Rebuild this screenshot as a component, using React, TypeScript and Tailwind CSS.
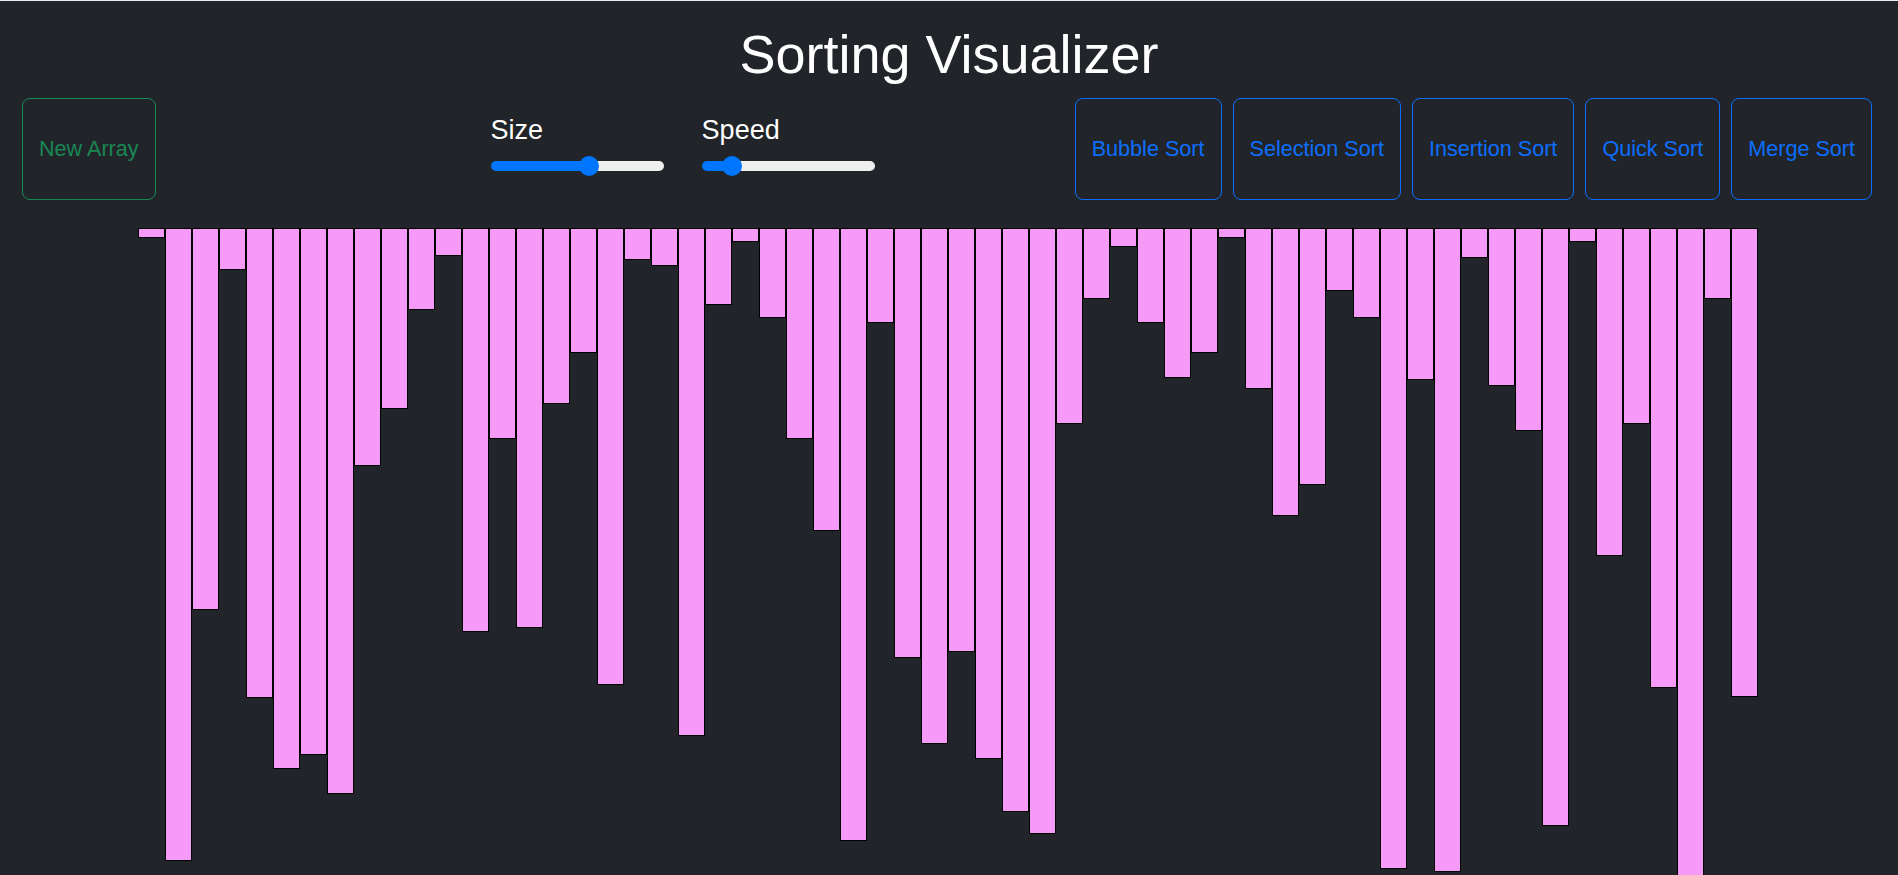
import React, { useState } from 'react';

// bar heights in px, read off the screenshot
const bars = [
  10, 633, 382, 42, 470, 541, 527, 566, 238, 181, 82, 28, 404, 211, 400, 176, 125, 457, 32, 38,
  508, 77, 14, 90, 211, 303, 613, 95, 430, 516, 424, 531, 584, 606, 196, 71, 19, 95, 150, 125,
  10, 161, 288, 257, 63, 90, 641, 152, 644, 30, 158, 203, 598, 14, 328, 196, 460, 700, 71, 469,
];

const sorts = ['Bubble Sort', 'Selection Sort', 'Insertion Sort', 'Quick Sort', 'Merge Sort'];

type SliderProps = {
  label: string;
  min: number;
  max: number;
  value: number;
  onChange: (v: number) => void;
  className?: string;
};

const Slider: React.FC<SliderProps> = ({ label, min, max, value, onChange, className }) => {
  // fill the track up to the thumb centre (track 173px, thumb 20px)
  const frac = (value - min) / (max - min);
  const pct = ((10 + frac * 153) / 173) * 100;

  return (
    <div className={`mt-[16px] flex flex-col ${className ?? ''}`}>
      <label className="text-[27px] leading-[1.2] text-white">{label}</label>
      <input
        type="range"
        min={min}
        max={max}
        value={value}
        onChange={(e) => onChange(Number(e.target.value))}
        className="mt-[15px] h-[10px] w-[173px] cursor-pointer appearance-none rounded-full outline-none [&::-webkit-slider-thumb]:h-[20px] [&::-webkit-slider-thumb]:w-[20px] [&::-webkit-slider-thumb]:appearance-none [&::-webkit-slider-thumb]:rounded-full [&::-webkit-slider-thumb]:bg-[#0075ff] [&::-webkit-slider-thumb]:border-0"
        style={{ background: `linear-gradient(to right, #0075ff ${pct}%, #efefef ${pct}%)` }}
      />
    </div>
  );
};

const App: React.FC = () => {
  const [size, setSize] = useState(60);
  const [speed, setSpeed] = useState(14);

  return (
    <div className="h-screen overflow-hidden border-t border-[#ececec] bg-[#212529] font-['Liberation_Sans',Arial,sans-serif]">
      <h1 className="pt-[21px] text-center text-[54px] leading-[1.2] text-white">Sorting Visualizer</h1>

      {/* Controls */}
      <div className="mt-[11px] flex items-start pl-[22px] pr-[26px]">
        <button className="h-[102px] rounded-[8px] border border-[#198754] px-[16px] text-[21.6px] text-[#198754]">
          New Array
        </button>

        <Slider label="Size" min={5} max={100} value={size} onChange={setSize} className="ml-[335px]" />
        <Slider label="Speed" min={1} max={100} value={speed} onChange={setSpeed} className="ml-[38px]" />

        <div className="ml-auto flex gap-[11px]">
          {sorts.map((s) => (
            <button
              key={s}
              className="h-[102px] rounded-[8px] border border-[#0d6efd] px-[16px] text-[21.6px] text-[#0d6efd]"
            >
              {s}
            </button>
          ))}
        </div>
      </div>

      {/* Bars */}
      <div className="mt-[28px] flex items-start justify-center pr-[2px]">
        {bars.map((h, i) => (
          <div
            key={i}
            className="w-[27px] shrink-0 border border-black bg-[#f59bf7]"
            style={{ height: h }}
          />
        ))}
      </div>
    </div>
  );
};

export default App;
